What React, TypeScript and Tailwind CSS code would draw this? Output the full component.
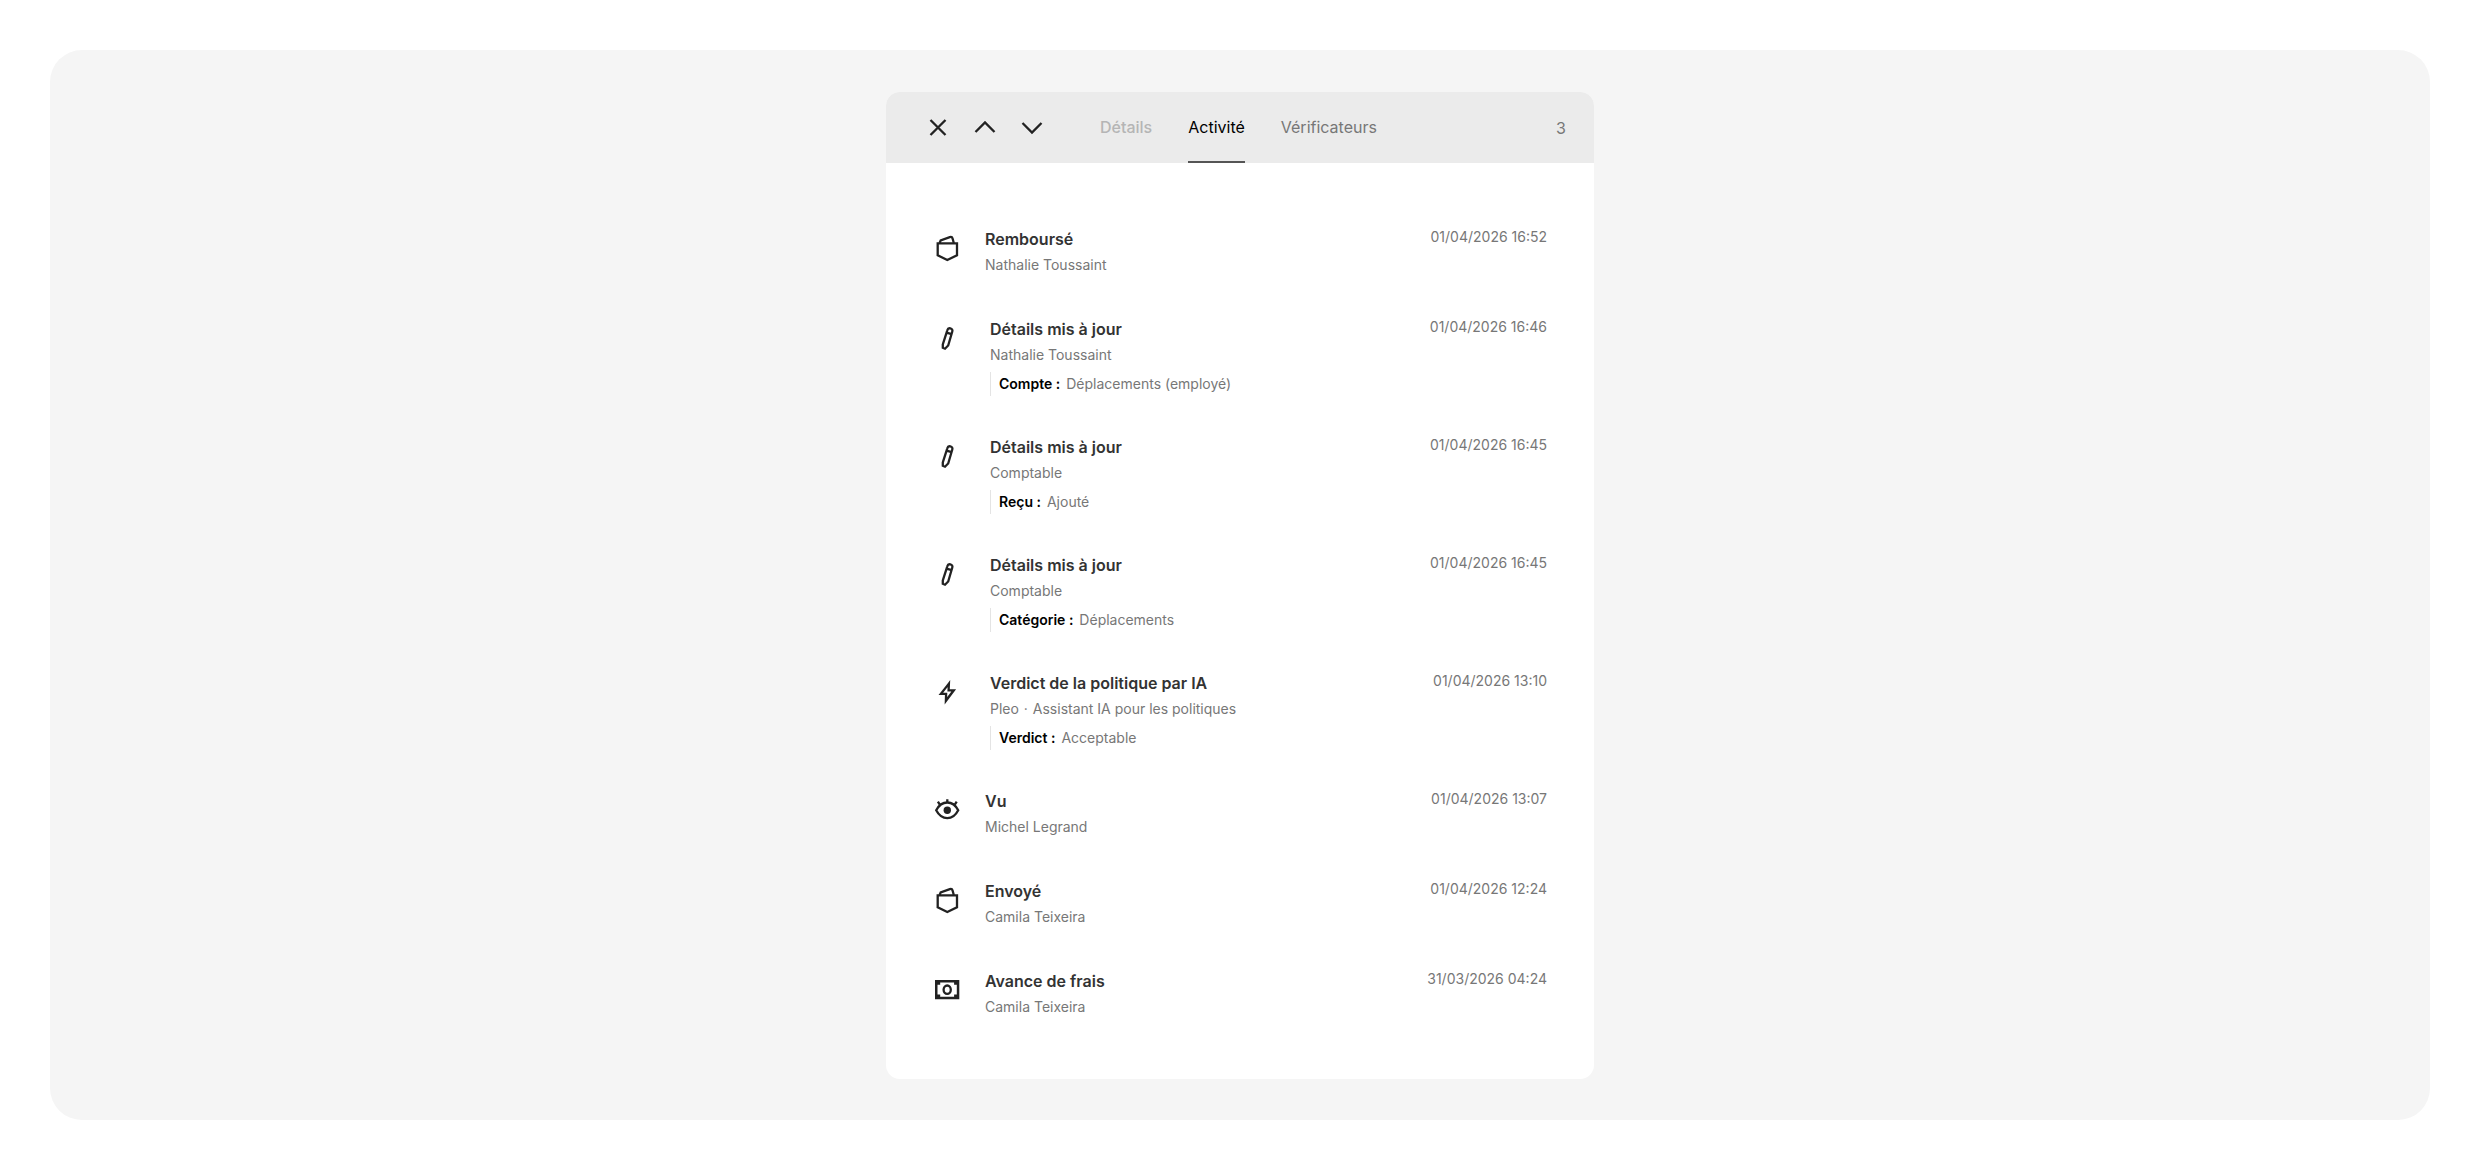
import { useState } from "react"
import clsx from "clsx"

type IconName = "pocket" | "pencil" | "bolt" | "eye" | "cash"

type Activity = {
    icon: IconName
    title: string
    author: React.ReactNode
    date: string
    label?: string
    value?: string
}

const activities: Activity[] = [
    { icon: "pocket", title: "Remboursé", author: "Nathalie Toussaint", date: "01/04/2026 16:52" },
    { icon: "pencil", title: "Détails mis à jour", author: "Nathalie Toussaint", date: "01/04/2026 16:46", label: "Compte :", value: "Déplacements (employé)" },
    { icon: "pencil", title: "Détails mis à jour", author: "Comptable", date: "01/04/2026 16:45", label: "Reçu :", value: "Ajouté" },
    { icon: "pencil", title: "Détails mis à jour", author: "Comptable", date: "01/04/2026 16:45", label: "Catégorie :", value: "Déplacements" },
    { icon: "bolt", title: "Verdict de la politique par IA", author: <>Pleo <span className="mx-px">·</span> Assistant IA pour les politiques</>, date: "01/04/2026 13:10", label: "Verdict :", value: "Acceptable" },
    { icon: "eye", title: "Vu", author: "Michel Legrand", date: "01/04/2026 13:07" },
    { icon: "pocket", title: "Envoyé", author: "Camila Teixeira", date: "01/04/2026 12:24" },
    { icon: "cash", title: "Avance de frais", author: "Camila Teixeira", date: "31/03/2026 04:24" },
]

const tabs = [
    { name: "Détails", disabled: true },
    { name: "Activité", disabled: false },
    { name: "Vérificateurs", disabled: false },
]

const icons: Record<IconName, React.ReactNode> = {
    pocket: <>
        <path d="M4.7 9.3H24v11.9L14.3 26 4.7 21.2z" />
        <path d="M6.6 9l1.1-2.7L16.8 3.1q2.2-.6 2.7 1.2L20.8 9" />
    </>,
    pencil: <path d="M14.3 6.3Q15 3.8 17.3 4.4Q20 5.1 19.3 7.5L15.2 21.5L12 24.7L9.8 23.8V20.5zM13.6 8.6l5 1.5" />,
    bolt: <path d="M15.9 5.6L7.9 15.8h5.2l-.2 7 7.9-10.5h-5.2z" />,
    eye: <>
        <path d="M3.2 14.3C6 9 9.8 6.5 14.3 6.5S22.5 9 25.2 14.3C22.5 19.6 18.8 22.2 14.3 22.2S6 19.6 3.2 14.3z" />
        <path d="M4.9 5.7l1.9 3M14.3 3.3v3M23.7 5.7l-1.9 3" />
        <circle cx="14.3" cy="14.3" r="3.7" fill="currentColor" stroke="none" />
    </>,
    cash: <>
        <path d="M2 4h24.3v19.3H2zM7.2 6.4v2.4H4.5v9.6h2.7v2.4h13.9v-2.4h2.7V8.8h-2.7V6.4z" fill="currentColor" fillRule="evenodd" stroke="none" />
        <ellipse cx="14.2" cy="13.7" rx="3.6" ry="4.2" />
    </>,
}

const ActivityIcon: React.FC<{ name: IconName }> = ({ name }) => (
    <svg className="mt-[7px] size-7 shrink-0 text-[#222222]" viewBox="0 0 28 28" fill="none" stroke="currentColor" strokeWidth="2.3" aria-hidden="true">
        {icons[name]}
    </svg>
)

const HeaderButton: React.FC<{ label: string, path: string }> = ({ label, path }) => (
    <button type="button" aria-label={label} className="size-6 cursor-pointer text-[#222222]">
        <svg className="size-6" viewBox="0 0 24 24" fill="none" stroke="currentColor" strokeWidth="2.3" aria-hidden="true">
            <path d={path} />
        </svg>
    </button>
)

const ActivityRow: React.FC<Activity> = (props) => {
    const { icon, title, author, date, label, value } = props

    return (
        <li className={clsx("flex items-start", label ? "pb-[39px]" : "pb-[42px]")}>
            <ActivityIcon name={icon} />
            <div className={clsx("grow", label ? "pl-[29px]" : "pl-6")}>
                <h3 className="text-base leading-6 font-semibold text-[#333333]">{title}</h3>
                <p className="mt-1 text-sm leading-5 text-[#777777]">{author}</p>
                {label && <p className="mt-[7px] border-l border-[#e4e4e4] pl-2 text-sm leading-6 text-[#777777]">
                    <strong className="mr-1.5 font-semibold text-black">{label}</strong>
                    {value}
                </p>}
            </div>
            <time className="text-sm leading-5 text-[#777777]">{date}</time>
        </li>
    )
}

const App: React.FC = () => {
    const [active, setActive] = useState<string>("Activité")

    return (
        <div className="min-h-screen bg-white p-[50px] font-['Inter',sans-serif]">
            <main className="rounded-[32px] bg-[#f5f5f5] px-6 pt-[42px] pb-[41px]">
                <section className="mx-auto w-full max-w-[708px] overflow-hidden rounded-[14px] bg-white">
                    <header className="flex h-[71px] items-center bg-[#ebebeb] pr-7 pl-10">
                        <div className="flex gap-[23px]">
                            <HeaderButton label="Fermer" path="M4.5 4l15 15M19.5 4l-15 15" />
                            <HeaderButton label="Précédent" path="M2.500 16L12 6.500l9.500 9.500" />
                            <HeaderButton label="Suivant" path="M2.500 7L12 16.500l9.500-9.500" />
                        </div>
                        <div role="tablist" className="ml-14 flex h-full gap-9">
                            {tabs.map(({ name, disabled }) => (
                                <button
                                    key={name}
                                    type="button"
                                    role="tab"
                                    aria-selected={active === name}
                                    disabled={disabled}
                                    onClick={() => setActive(name)}
                                    className={clsx(
                                        "border-b-2 text-base",
                                        active === name ? "border-b-[#555555] text-black" : "border-b-transparent",
                                        disabled && "font-medium text-[#b5b5b5]",
                                        !disabled && active !== name && "text-[#777777]",
                                    )}
                                >
                                    {name}
                                </button>
                            ))}
                        </div>
                        <span className="ml-auto text-base text-[#777777]">3</span>
                    </header>
                    <ul className="px-[47px] pt-16 pb-5">
                        {activities.map((activity, index) => <ActivityRow key={index} {...activity} />)}
                    </ul>
                </section>
            </main>
        </div>
    )
}

export default App
